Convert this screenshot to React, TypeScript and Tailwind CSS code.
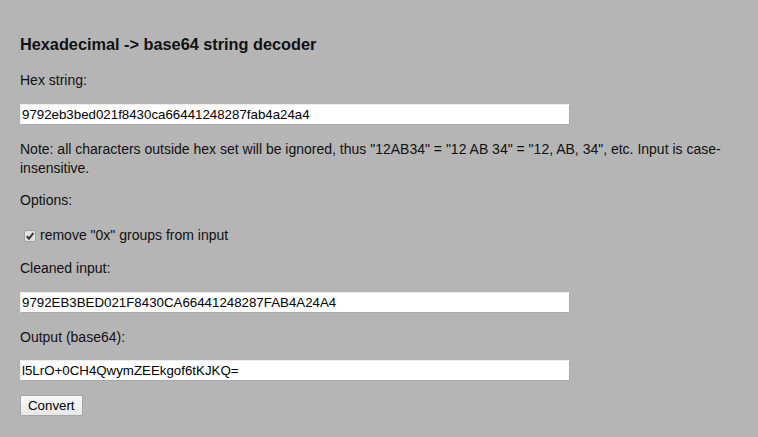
import React from 'react';

const Field: React.FC<{ value: string }> = ({ value }) => (
  <div className="w-[550px] h-[21px] bg-white border border-t-[#ececec] border-l-[#ececec] border-r-[#a9a9a9] border-b-[#a9a9a9] text-[13.3px] leading-[19px] pl-px text-black">
    {value}
  </div>
);

const App: React.FC = () => {
  return (
    <div
      className="w-[758px] h-[437px] bg-[#b5b5b5] px-5 pt-[35px] text-[14px] leading-[19px] text-[#111]"
      style={{ fontFamily: '"Liberation Sans", Arial, sans-serif' }}
    >
      <h3 className="text-[16.3px] font-bold leading-[19px]">Hexadecimal -&gt; base64 string decoder</h3>
      <p className="mt-[17px]">Hex string:</p>
      <div className="mt-[14px]">
        <Field value="9792eb3bed021f8430ca66441248287fab4a24a4" />
      </div>
      <p className="mt-[15px]">
        Note: all characters outside hex set will be ignored, thus "12AB34" = "12 AB 34" = "12, AB, 34", etc. Input is case-insensitive.
      </p>
      <p className="mt-[13px]">Options:</p>
      <label className="mt-[16px] flex items-center gap-[4px] pl-[4px]">
        <span className="w-[12px] h-[12px] rounded-[2px] border border-[#a0a0a0] bg-[#e2e2e2] flex items-center justify-center">
          <svg width="10" height="10" viewBox="0 0 10 10">
            <path d="M1.8 5.2 L4 7.6 L8.4 2" fill="none" stroke="#333" strokeWidth="2" />
          </svg>
        </span>
        remove "0x" groups from input
      </label>
      <p className="mt-[14px]">Cleaned input:</p>
      <div className="mt-[14px]">
        <Field value="9792EB3BED021F8430CA66441248287FAB4A24A4" />
      </div>
      <p className="mt-[15px]">Output (base64):</p>
      <div className="mt-[13px]">
        <Field value="l5LrO+0CH4QwymZEEkgof6tKJKQ=" />
      </div>
      <button className="mt-[14px] h-[21px] px-[7px] text-[13.3px] leading-[17px] text-black bg-gradient-to-b from-[#fafafa] to-[#e8e8e8] border border-[#a6a6a6] rounded-[2px]">
        Convert
      </button>
    </div>
  );
};

export default App;
